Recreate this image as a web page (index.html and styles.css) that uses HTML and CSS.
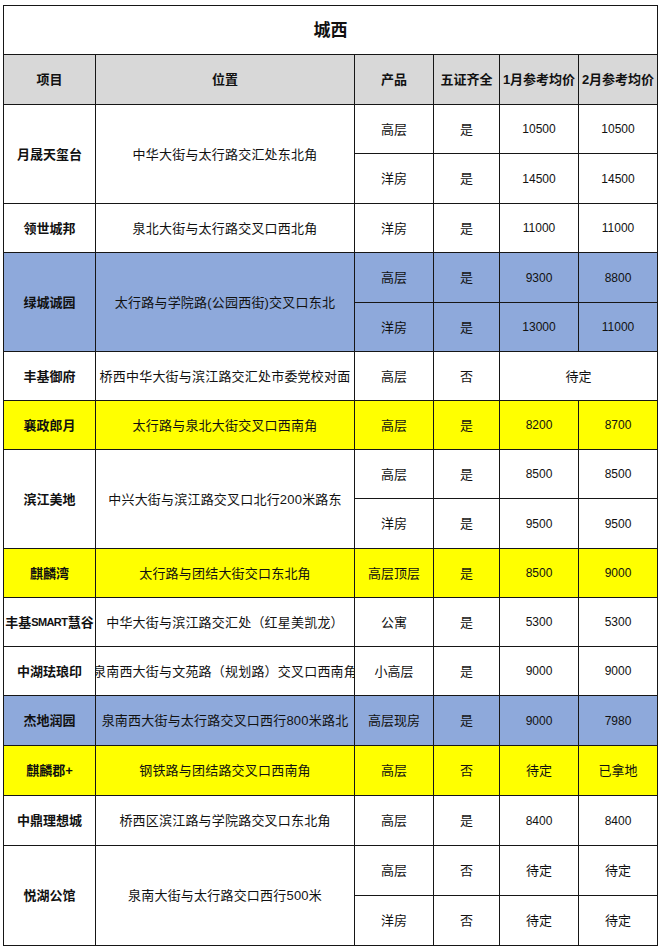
FILE: index.html
```html
<!DOCTYPE html>
<html lang="zh">
<head>
<meta charset="utf-8">
<title>城西</title>
<link rel="stylesheet" href="styles.css">
</head>
<body>
<div class="sheet">
  <div class="c title">城西</div>

  <div class="c hd">项目</div>
  <div class="c hd">位置</div>
  <div class="c hd">产品</div>
  <div class="c hd">五证齐全</div>
  <div class="c hd">1月参考均价</div>
  <div class="c hd">2月参考均价</div>

  <div class="c name span2">月晟天玺台</div>
  <div class="c loc span2">中华大街与太行路交汇处东北角</div>
  <div class="c">高层</div><div class="c">是</div><div class="c num">10500</div><div class="c num">10500</div>
  <div class="c">洋房</div><div class="c">是</div><div class="c num">14500</div><div class="c num">14500</div>

  <div class="c name">领世城邦</div>
  <div class="c loc">泉北大街与太行路交叉口西北角</div>
  <div class="c">洋房</div><div class="c">是</div><div class="c num">11000</div><div class="c num">11000</div>

  <div class="c name span2 blue">绿城诚园</div>
  <div class="c loc span2 blue">太行路与学院路(公园西街)交叉口东北</div>
  <div class="c blue">高层</div><div class="c blue">是</div><div class="c num blue">9300</div><div class="c num blue">8800</div>
  <div class="c blue">洋房</div><div class="c blue">是</div><div class="c num blue">13000</div><div class="c num blue">11000</div>

  <div class="c name">丰基御府</div>
  <div class="c loc">桥西中华大街与滨江路交汇处市委党校对面</div>
  <div class="c">高层</div><div class="c">否</div><div class="c wide">待定</div>

  <div class="c name yellow">襄政郎月</div>
  <div class="c loc yellow">太行路与泉北大街交叉口西南角</div>
  <div class="c yellow">高层</div><div class="c yellow">是</div><div class="c num yellow">8200</div><div class="c num yellow">8700</div>

  <div class="c name span2">滨江美地</div>
  <div class="c loc span2">中兴大街与滨江路交叉口北行200米路东</div>
  <div class="c">高层</div><div class="c">是</div><div class="c num">8500</div><div class="c num">8500</div>
  <div class="c">洋房</div><div class="c">是</div><div class="c num">9500</div><div class="c num">9500</div>

  <div class="c name yellow">麒麟湾</div>
  <div class="c loc yellow">太行路与团结大街交口东北角</div>
  <div class="c yellow">高层顶层</div><div class="c yellow">是</div><div class="c num yellow">8500</div><div class="c num yellow">9000</div>

  <div class="c name">丰基<span class="latin">SMART</span>慧谷</div>
  <div class="c loc">中华大街与滨江路交汇处（红星美凯龙）</div>
  <div class="c">公寓</div><div class="c">是</div><div class="c num">5300</div><div class="c num">5300</div>

  <div class="c name">中湖珐琅印</div>
  <div class="c loc">泉南西大街与文苑路（规划路）交叉口西南角</div>
  <div class="c">小高层</div><div class="c">是</div><div class="c num">9000</div><div class="c num">9000</div>

  <div class="c name blue">杰地润园</div>
  <div class="c loc blue">泉南西大街与太行路交叉口西行800米路北</div>
  <div class="c blue">高层现房</div><div class="c blue">是</div><div class="c num blue">9000</div><div class="c num blue">7980</div>

  <div class="c name yellow">麒麟郡+</div>
  <div class="c loc yellow">钢铁路与团结路交叉口西南角</div>
  <div class="c yellow">高层</div><div class="c yellow">否</div><div class="c yellow">待定</div><div class="c yellow">已拿地</div>

  <div class="c name">中鼎理想城</div>
  <div class="c loc">桥西区滨江路与学院路交叉口东北角</div>
  <div class="c">高层</div><div class="c">是</div><div class="c num">8400</div><div class="c num">8400</div>

  <div class="c name span2">悦湖公馆</div>
  <div class="c loc span2">泉南大街与太行路交口西行500米</div>
  <div class="c">高层</div><div class="c">否</div><div class="c">待定</div><div class="c">待定</div>
  <div class="c">洋房</div><div class="c">否</div><div class="c">待定</div><div class="c">待定</div>
</div>
</body>
</html>
```

FILE: styles.css
```css
html, body {
  margin: 0;
  padding: 0;
  background: #ffffff;
}

body {
  font-family: "Liberation Sans", "Noto Sans CJK SC", sans-serif;
  color: #111111;
}

.sheet {
  margin: 5px 0 0 3px;
  width: 655px;
  box-sizing: border-box;
  display: grid;
  grid-template-columns: 91px 258px 78px 65px 78px 78px;
  grid-template-rows: 48px 49px 48px 49px 48px 49px 48px 48px 48px 48px 49px 48px 48px 48px 49px 49px 49px 49px 49px;
  gap: 1px;
  padding: 1px;
  background: #161616;
}

.c {
  background: #ffffff;
  display: flex;
  align-items: center;
  justify-content: center;
  overflow: hidden;
  white-space: nowrap;
  font-size: 13px;
  line-height: 1;
}

.title {
  grid-column: span 6;
  font-size: 17px;
  font-weight: 700;
}

.hd {
  background: #d8d8d8;
  font-weight: 700;
}

.name {
  font-weight: 700;
}

.latin {
  font-size: 11px;
  letter-spacing: -0.6px;
  margin-right: 0.5px;
}

.loc {
  letter-spacing: 0.2px;
}

.num {
  font-size: 12px;
}

.span2 {
  grid-row: span 2;
}

.wide {
  grid-column: span 2;
}

.blue {
  background: #8ea9db;
}

.yellow {
  background: #ffff00;
}
```
